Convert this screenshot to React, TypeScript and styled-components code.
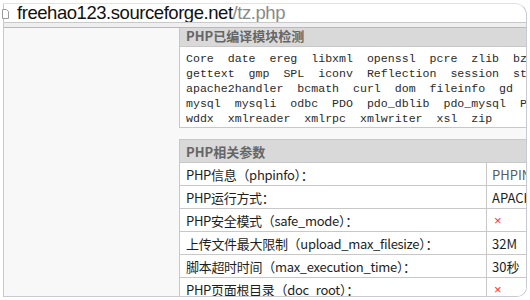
import styled, { createGlobalStyle } from "styled-components";

const GlobalStyle = createGlobalStyle`
  html, body {
    margin: 0;
    padding: 0;
    background: #ffffff;
  }
`;

const Page = styled.div({
  width: "530px",
  height: "300px",
  paddingTop: "3px",
  paddingLeft: "3px",
  boxSizing: "border-box",
});

const Window = styled.div({
  width: "524px",
  height: "294px",
  boxSizing: "border-box",
  border: "1px solid #c9c9d1",
  borderTopColor: "#e2e2e6",
  borderRadius: "0 12px 10px 0",
  display: "flex",
  flexDirection: "column",
  background: "#ffffff",
});

const AddressBar = styled.div({
  height: "18px",
  display: "flex",
  alignItems: "flex-end",
  gap: "8px",
  fontFamily: '"Liberation Sans", Arial, sans-serif',
  fontSize: "18.5px",
  letterSpacing: "-0.45px",
  lineHeight: "18px",
  color: "#111",
  whiteSpace: "nowrap",
  overflow: "visible",
});

const PageIcon = styled.svg({
  flex: "none",
  marginBottom: "3px",
  marginLeft: "-2px",
});

const Host = styled.span({ color: "#111" });
const Path = styled.span({ color: "#8a8a8a" });

const Toolbar = styled.div({
  height: "4px",
  borderTop: "1px solid #c9c9c9",
  borderBottom: "1px solid #b9b9b9",
  background: "#efefef",
});

const Viewport = styled.div({
  flex: 1,
  overflow: "hidden",
  background: "#f8f8f8",
  paddingLeft: "175px",
  borderBottomRightRadius: "9px",
});

const Content = styled.div({
  marginTop: "-5px",
  width: "430px",
});

const SectionHeader = styled.div({
  height: "23px",
  boxSizing: "border-box",
  border: "1px solid #c6c6c6",
  borderBottom: "none",
  background: "#d9d9d9",
  padding: "0 6px",
  display: "flex",
  alignItems: "center",
  fontFamily: '"Noto Sans CJK SC", "Liberation Sans", sans-serif',
  fontWeight: 700,
  fontSize: "13px",
  color: "#666",
});

const ModuleBox = styled.div({
  border: "1px solid #c8c8c8",
  background: "#ffffff",
  padding: "4px 6px 1px",
  fontFamily: '"Liberation Mono", "Courier New", monospace',
  fontSize: "11.6px",
  lineHeight: "15px",
  color: "#2a2a2a",
  whiteSpace: "pre",
});

const ParamTable = styled.div({
  marginTop: "11px",
  border: "1px solid #c8c8c8",
  borderRight: "none",
  background: "#ffffff",
});

const TableHead = styled.div({
  height: "22px",
  borderBottom: "1px solid #c8c8c8",
  background: "#d9d9d9",
  padding: "0 6px",
  display: "flex",
  alignItems: "center",
  fontFamily: '"Noto Sans CJK SC", "Liberation Sans", sans-serif',
  fontWeight: 700,
  fontSize: "13px",
  color: "#666",
});

const Row = styled.div({
  display: "grid",
  gridTemplateColumns: "307px 1fr",
  height: "22px",
  borderBottom: "1px solid #c8c8c8",
  fontFamily: '"Noto Sans CJK SC", "Liberation Sans", sans-serif',
  fontSize: "13px",
  color: "#1e1e1e",
});

const Label = styled.div({
  borderRight: "1px solid #c8c8c8",
  paddingLeft: "6px",
  display: "flex",
  alignItems: "center",
  whiteSpace: "nowrap",
  letterSpacing: "-0.3px",
});

const Value = styled.div<{ $tone?: "muted" | "bad" }>(({ $tone }) => ({
  paddingLeft: $tone === "bad" ? "7px" : "5px",
  display: "flex",
  alignItems: "center",
  whiteSpace: "nowrap",
  color: $tone === "muted" ? "#5a5a5a" : $tone === "bad" ? "#ff3030" : "#1e1e1e",
  fontSize: $tone === "bad" ? "13px" : "13px",
  fontFamily: $tone === "bad" ? '"Liberation Sans", sans-serif' : "inherit",
}));

const modules = [
  "Core  date  ereg  libxml  openssl  pcre  zlib  bz2  calendar  ctype",
  "gettext  gmp  SPL  iconv  Reflection  session  standard  hash",
  "apache2handler  bcmath  curl  dom  fileinfo  gd  json  mbstring",
  "mysql  mysqli  odbc  PDO  pdo_dblib  pdo_mysql  Phar  SimpleXML",
  "wddx  xmlreader  xmlrpc  xmlwriter  xsl  zip",
];

const params: { label: string; value: string; tone?: "muted" | "bad" }[] = [
  { label: "PHP信息（phpinfo）：", value: "PHPINFO", tone: "muted" },
  { label: "PHP运行方式：", value: "APACHE2HANDLER" },
  { label: "PHP安全模式（safe_mode）：", value: "×", tone: "bad" },
  { label: "上传文件最大限制（upload_max_filesize）：", value: "32M" },
  { label: "脚本超时时间（max_execution_time）：", value: "30秒" },
  { label: "PHP页面根目录（doc_root）：", value: "×", tone: "bad" },
];

export default function App() {
  return (
    <Page>
      <GlobalStyle />
      <Window>
        <AddressBar>
          <PageIcon width="7" height="10" viewBox="0 0 7 10">
            <path d="M0.5 0.5 H4.5 L6.5 2.5 V9.5 H0.5 Z" fill="#fff" stroke="#9a9a9a" />
          </PageIcon>
          <span>
            <Host>freehao123.sourceforge.net</Host>
            <Path>/tz.php</Path>
          </span>
        </AddressBar>
        <Toolbar />
        <Viewport>
          <Content>
            <SectionHeader>PHP已编译模块检测</SectionHeader>
            <ModuleBox>{modules.join("\n")}</ModuleBox>
            <ParamTable>
              <TableHead>PHP相关参数</TableHead>
              {params.map((p) => (
                <Row key={p.label}>
                  <Label>{p.label}</Label>
                  <Value $tone={p.tone}>{p.value}</Value>
                </Row>
              ))}
            </ParamTable>
          </Content>
        </Viewport>
      </Window>
    </Page>
  );
}
